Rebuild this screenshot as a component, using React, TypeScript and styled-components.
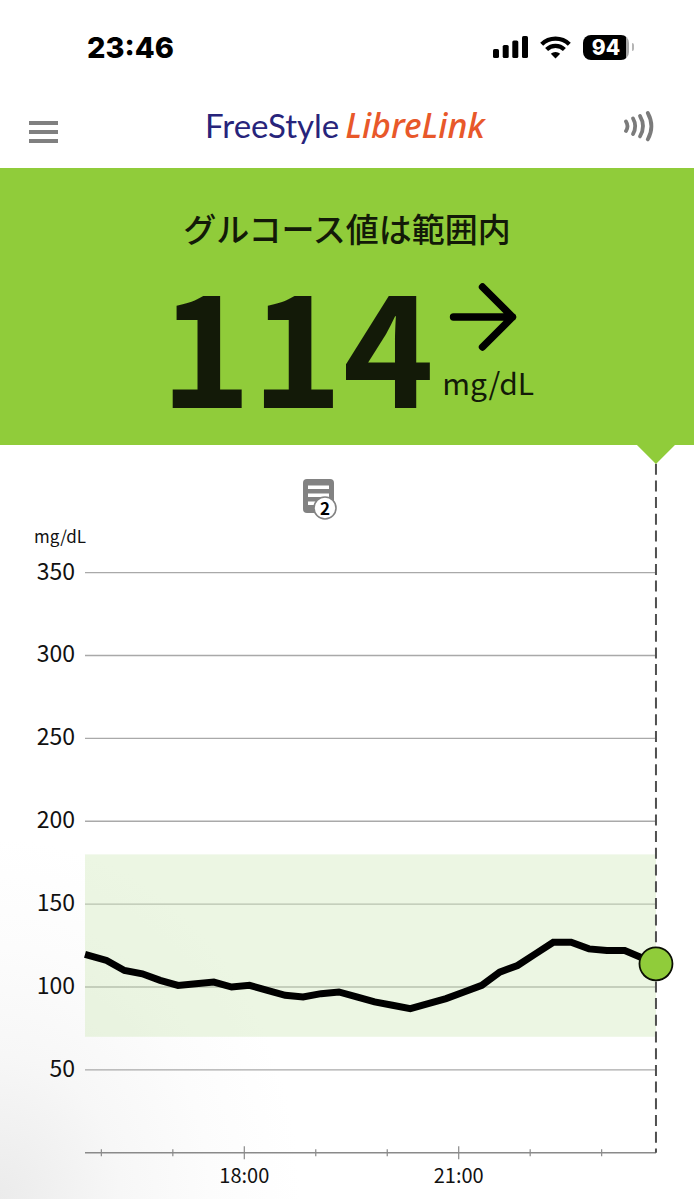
import React from "react";
import styled, { createGlobalStyle } from "styled-components";

const JP = `"Noto Sans CJK JP", "Noto Sans", sans-serif`;

const GlobalStyle = createGlobalStyle`
  *, *::before, *::after { box-sizing: border-box; }
  body { margin: 0; background: #fff; font-family: ${JP}; }
  button { border: 0; padding: 0; background: none; cursor: pointer; display: block; }
`;

const Page = styled.div`
  min-height: 100vh;
  overflow: hidden;
  background: radial-gradient(ellipse 300px 360px at 0 100%, #ebebeb 0%, #f7f7f7 40%, #fcfcfc 70%, #fff 100%);
`;

const StatusBar = styled.div`
  display: flex;
  justify-content: space-between;
  align-items: center;
  height: 94px;
  padding: 0 60px 0 87px;
  color: #000;
  background: #fff;
`;

const Clock = styled.time`
  padding-top: 2px;
  font: 800 29px/32px Inter, sans-serif;
`;

const StatusIcons = styled.div`
  display: flex;
  align-items: center;
  gap: 12px;
`;

const BatteryShell = styled.div`
  display: flex;
  align-items: center;
  gap: 3px;
`;

const BatteryBody = styled.div`
  width: 46px;
  height: 25px;
  border-radius: 8px;
  background: linear-gradient(90deg, #000 94%, #a8a8a8 94%);
  color: #fff;
  font: 800 21px/25px Inter, sans-serif;
  text-align: center;
`;

const BatteryTip = styled.span`
  width: 2px;
  height: 8px;
  border-radius: 0 2px 2px 0;
  background: #b5b5b5;
`;

const NavBar = styled.header`
  display: flex;
  justify-content: space-between;
  align-items: center;
  height: 74px;
  padding: 0 40px 8px 29px;
  background: #fff;
`;

const MenuButton = styled.button`
  display: flex;
  flex-direction: column;
  gap: 5px;
  padding-top: 10px;
`;

const MenuBar = styled.span`
  display: block;
  width: 29px;
  height: 4px;
  background: #808080;
`;

const Brand = styled.h1`
  display: flex;
  align-items: baseline;
  gap: 6px;
  margin: 0;
  padding: 0 0 4px 8px;
  line-height: 44px;
  font-weight: 400;
`;

const BrandFree = styled.span`
  font-family: Lato, sans-serif;
  font-size: 33px;
  color: #27247b;
`;

const BrandLibre = styled.span`
  font-family: "Noto Sans", sans-serif;
  font-size: 34px;
  font-style: italic;
  font-weight: 500;
  color: #e8582a;
`;

const Hero = styled.section`
  padding: 40px 0 27px;
  background: #90cc3a;
  color: #131a08;
`;

const HeroTitle = styled.h2`
  margin: 0;
  font-size: 33px;
  line-height: 40px;
  font-weight: 500;
  text-align: center;
`;

const Reading = styled.div`
  display: flex;
  justify-content: center;
  gap: 8px;
  margin-top: 16px;
`;

const ReadingValue = styled.strong`
  font-size: 155px;
  line-height: 154px;
  font-weight: 700;
`;

const ReadingSide = styled.div`
  display: flex;
  flex-direction: column;
  align-items: center;
  gap: 12px;
  padding-top: 18px;
`;

const ReadingUnit = styled.span`
  font-size: 30px;
  line-height: 36px;
`;

const ChartArea = styled.main`
  position: relative;
`;

const ChartSvg = styled.svg`
  display: block;
  width: 100%;
  height: auto;
  font-family: ${JP};
  fill: #111;
`;

const NoteButton = styled.button`
  position: absolute;
  top: 34px;
  transform: translateX(-50%);
`;

/* Chart scales */
const WIDTH = 694;
const HEIGHT = 754;
const LEFT = 85;
const BASE = 707.8;
const PER_UNIT = 1.6577;
const HOUR = 71.47;
const yOf = (value: number) => BASE - value * PER_UNIT;
const xOf = (hour: number) => 244.3 + (hour - 18) * HOUR;
const NOW = xOf(23.76);

const levels = [350, 300, 250, 200, 150, 100, 50];
const hours = [16, 17, 18, 19, 20, 21, 22, 23];
const FIRST_SAMPLE = 16.073;
const samples = [
  116, 110, 108, 104, 101, 102, 103, 100, 101, 98, 95, 94, 96, 97, 94, 91, 89, 87,
  90, 93, 97, 101, 109, 113, 120, 127, 127, 123, 122, 122,
];
const trace = [
  `${LEFT},${yOf(119.7)}`,
  ...samples.map((v, i) => `${xOf(FIRST_SAMPLE + i * 0.25)},${yOf(v)}`),
  `${NOW},${yOf(114)}`,
].join(" ");

const Signal = () => (
  <svg width="35" height="22" viewBox="0 0 35 22" aria-hidden="true">
    <rect x="0" y="13" width="6" height="9" rx="1.6" />
    <rect x="9.700" y="9" width="6" height="13" rx="1.6" />
    <rect x="19.300" y="4.500" width="6" height="17.500" rx="1.600" />
    <rect x="29" y="0" width="6" height="22" rx="1.6" />
  </svg>
);

const Wifi = () => (
  <svg width="31" height="23" viewBox="0 0 31 23" aria-hidden="true">
    <path d="M1.700 8.300a19.500 19.500 0 0 1 27.600 0" fill="none" stroke="#000" strokeWidth="4.200" />
    <path d="M6.600 13.600a12.600 12.600 0 0 1 17.800 0" fill="none" stroke="#000" strokeWidth="4.200" />
    <path d="M10.800 17.800a6.800 6.800 0 0 1 9.400 0L15.500 22.600z" />
  </svg>
);

const Scan = () => (
  <svg width="30" height="32" viewBox="1 0 30 32" fill="none" stroke="#7b7b7b" strokeWidth="3.800" strokeLinecap="round" aria-hidden="true">
    <path d="M3 11.400q3 4.800 0 9.600" />
    <path d="M10 8.400q4.400 7.800 0 15.600" />
    <path d="M17 6q6 10.200 0 20.400" />
    <path d="M24.800 3q7.200 13.200 0 26.400" />
  </svg>
);

const Arrow = () => (
  <svg width="78" height="70" viewBox="0 0 78 70" fill="none" stroke="#000" strokeWidth="7.400" strokeLinecap="round" strokeLinejoin="round" role="img" aria-label="安定">
    <path d="M4.500 35H63.500M33.500 5L63.500 35L33.500 65" />
  </svg>
);

const Note = () => (
  <svg width="36" height="42" viewBox="0 0 36 42" aria-hidden="true">
    <rect x="1" y="0" width="31" height="34" rx="4" fill="#828282" />
    <path d="M6 8.200h21M6 16.200h21M6 24.200h21" stroke="#fff" strokeWidth="3.600" />
    <circle cx="23" cy="29" r="11" fill="#fff" stroke="#828282" strokeWidth="1.600" />
    <text x="23" y="36" textAnchor="middle" fontSize="17" fontWeight="700" fontFamily={JP}>2</text>
  </svg>
);

const GlucoseChart = () => (
  <ChartSvg viewBox={`0 0 ${WIDTH} ${HEIGHT}`} role="img" aria-label="グルコースグラフ">
    <text x="34" y="98" fontSize="17">mg/dL</text>
    {levels.map((level) => (
      <g key={level}>
        <line x1={LEFT} x2={NOW} y1={yOf(level)} y2={yOf(level)} stroke="#a9a9a9" strokeWidth="1.4" />
        <text x="75" y={yOf(level) + 7} fontSize="23" textAnchor="end">{level}</text>
      </g>
    ))}
    <rect x={LEFT} y={yOf(180)} width={NOW - LEFT} height={yOf(70) - yOf(180)} fill="#d0e9b9" fillOpacity="0.4" />
    <line x1={LEFT} x2={NOW} y1={BASE} y2={BASE} stroke="#8a8a8a" strokeWidth="1.400" />
    {hours.map((hour) => {
      const major = hour % 3 === 0;
      const reach = major ? 6.500 : 3.500;
      return (
        <g key={hour}>
          <line x1={xOf(hour)} x2={xOf(hour)} y1={BASE - reach} y2={BASE + reach} stroke="#8a8a8a" strokeWidth="1.200" />
          {major && (
            <text x={xOf(hour)} y="738" fontSize="20" textAnchor="middle">{hour}:00</text>
          )}
        </g>
      );
    })}
    <line x1={NOW} x2={NOW} y1="18.700" y2={BASE} stroke="#505050" strokeWidth="2" strokeDasharray="11 5.700" />
    <path d={`M${NOW - 19} 0H${NOW + 19}L${NOW} 19z`} fill="#90cc3a" />
    <polyline points={trace} fill="none" stroke="#000" strokeWidth="7" strokeLinejoin="miter" />
    <circle cx={NOW} cy={yOf(114)} r="16.500" fill="#90cc3a" stroke="#0b0f04" strokeWidth="1.800" />
  </ChartSvg>
);

export default function App() {
  return (
    <Page>
      <GlobalStyle />
      <StatusBar>
        <Clock>23:46</Clock>
        <StatusIcons>
          <Signal />
          <Wifi />
          <BatteryShell>
            <BatteryBody>94</BatteryBody>
            <BatteryTip />
          </BatteryShell>
        </StatusIcons>
      </StatusBar>
      <NavBar>
        <MenuButton type="button" aria-label="メニュー">
          <MenuBar />
          <MenuBar />
          <MenuBar />
        </MenuButton>
        <Brand>
          <BrandFree>FreeStyle</BrandFree>
          <BrandLibre>LibreLink</BrandLibre>
        </Brand>
        <button type="button" aria-label="スキャン">
          <Scan />
        </button>
      </NavBar>
      <Hero>
        <HeroTitle>グルコース値は範囲内</HeroTitle>
        <Reading>
          <ReadingValue>114</ReadingValue>
          <ReadingSide>
            <Arrow />
            <ReadingUnit>mg/dL</ReadingUnit>
          </ReadingSide>
        </Reading>
      </Hero>
      <ChartArea>
        <GlucoseChart />
        <NoteButton type="button" aria-label="メモ 2件" style={{ left: `${(xOf(19.06) / WIDTH) * 100}%` }}>
          <Note />
        </NoteButton>
      </ChartArea>
    </Page>
  );
}
